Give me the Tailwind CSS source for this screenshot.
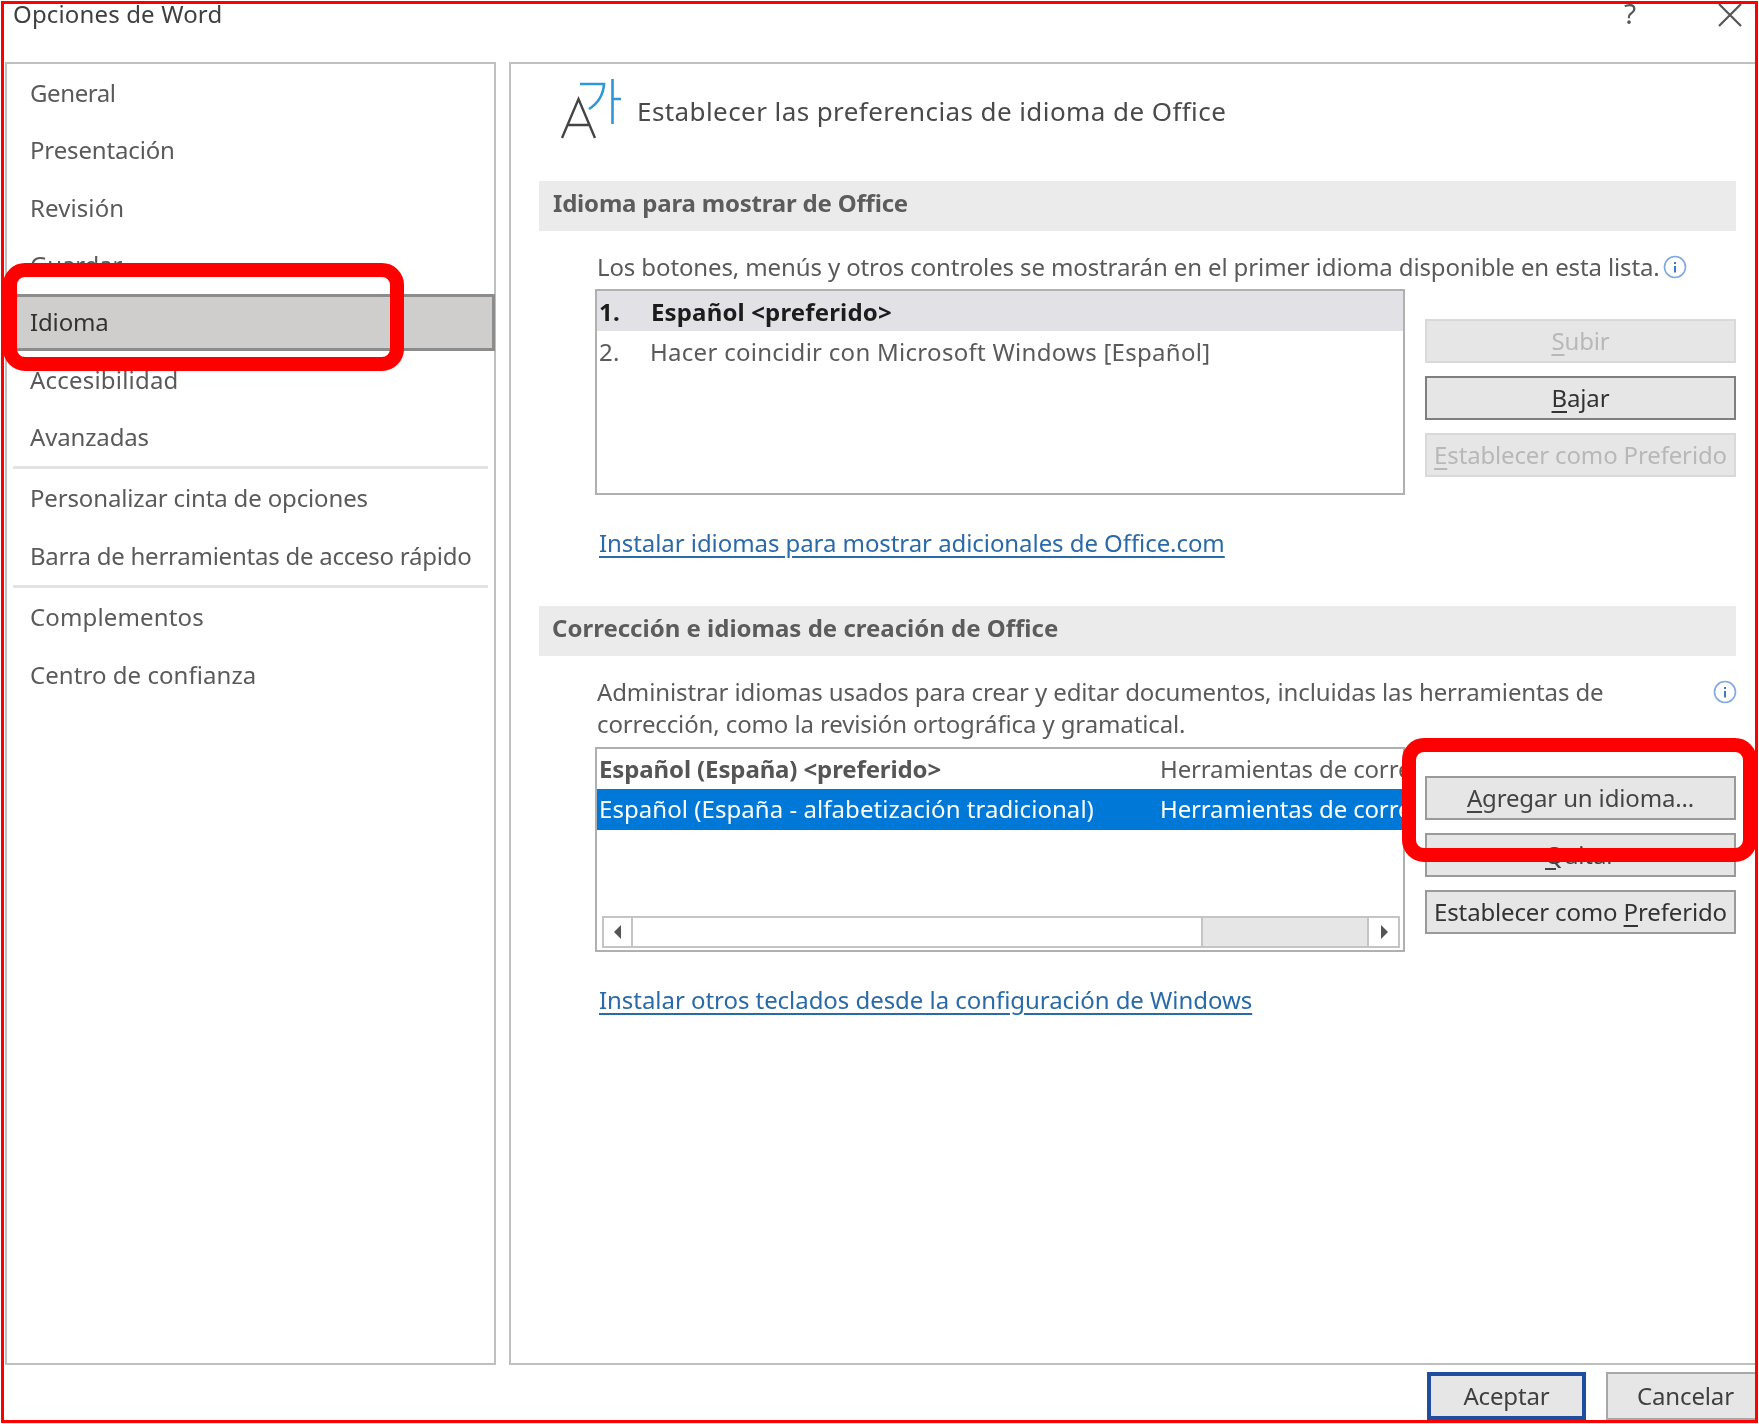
<!DOCTYPE html>
<html lang="es">
<head>
<meta charset="utf-8">
<title>Opciones de Word</title>
<script src="https://cdn.jsdelivr.net/npm/@tailwindcss/browser@4"></script>
</head>
<body class="m-0 bg-white">
<div class="relative w-[1759px] h-[1424px] overflow-hidden bg-white font-['Noto_Sans','Open_Sans',sans-serif] text-[24px] leading-[33px] tracking-[-0.15px] text-[#5a5a5a]">
  <div class="w-[1755px] h-[1420px] mt-[3px] ml-[3px] overflow-hidden flex flex-col blur-[0.4px]">
    <!-- title bar -->
    <div class="h-[59px] shrink-0 flex justify-between overflow-hidden pl-[10px]">
      <span class="-mt-[6px] text-[#404040] tracking-[0.15px]">Opciones de Word</span>
      <div class="flex -mt-[6px]">
        <span class="w-[22px] text-center text-[#555] text-[28px]">?</span>
        <div class="w-[117px] flex justify-center pl-[61px] pt-[6px]">
          <svg width="24" height="24" viewBox="0 0 24 24" class="shrink-0"><path d="M1 1 L23 23 M23 1 L1 23" stroke="#555" stroke-width="2.2" fill="none"/></svg>
        </div>
      </div>
    </div>
    <!-- panels -->
    <div class="h-[1303px] shrink-0 flex gap-[13px] pl-[2px]">
      <!-- sidebar -->
      <nav class="w-[491px] shrink-0 border-2 border-[#bfbfbf] pt-[1px]">
        <div class="h-[57px] pb-[2px] flex items-center pl-[23px] tracking-[-0.4px]">General</div>
        <div class="h-[57px] pb-[2px] flex items-center pl-[23px]">Presentación</div>
        <div class="h-[58px] pb-[2px] flex items-center pl-[23px] tracking-[0.1px]">Revisión</div>
        <div class="h-[57px] pb-[2px] flex items-center pl-[23px]">Guardar</div>
        <div class="h-[57px] pb-[2px] -mr-[1px] flex items-center pl-[20px] bg-[#d0cecd] border-[3px] border-[#8c8c8c] text-[#333]">Idioma</div>
        <div class="h-[58px] pb-[2px] flex items-center pl-[23px] tracking-[0.2px]">Accesibilidad</div>
        <div class="h-[57px] pb-[2px] flex items-center pl-[23px]">Avanzadas</div>
        <div class="h-[3px] mx-[6px] bg-[#e3e3e3]"></div>
        <div class="h-[59px] pb-[2px] flex items-center pl-[23px]">Personalizar cinta de opciones</div>
        <div class="h-[57px] pb-[2px] flex items-center pl-[23px] tracking-[-0.24px]">Barra de herramientas de acceso rápido</div>
        <div class="h-[3px] mx-[6px] bg-[#e3e3e3]"></div>
        <div class="h-[59px] pb-[2px] flex items-center pl-[23px] tracking-[0.15px]">Complementos</div>
        <div class="h-[57px] pb-[2px] flex items-center pl-[23px] tracking-[0.05px]">Centro de confianza</div>
      </nav>
      <!-- main -->
      <main class="flex-1 border-2 border-r-0 border-[#bfbfbf] pl-[27px] pr-[19px]">
        <div class="h-[117px] flex">
          <svg width="66" height="66" viewBox="0 0 66 66" class="shrink-0 ml-[18px] mt-[12px]">
            <path d="M6 62 L22.500 23 L39 62 M11 49 H34" stroke="#444" stroke-width="2.400" fill="none"/>
            <path d="M24 8 H48 Q47 24 33 33" stroke="#2e97d8" stroke-width="2.600" fill="none"/>
            <path d="M56.500 3 V48 M56.500 23 H65" stroke="#2e97d8" stroke-width="2.600" fill="none"/>
          </svg>
          <h1 class="ml-[15px] mt-[27px] h-[40px] text-[26px] leading-[40px] font-normal tracking-[0.42px] text-[#4a4a4a]">Establecer las preferencias de idioma de Office</h1>
        </div>
        <h2 class="h-[50px] ml-[1px] mr-[3px] bg-[#ebebeb] pl-[14px] pb-[8px] flex items-center font-bold text-[#5c5c5c] tracking-[-0.2px]">Idioma para mostrar de Office</h2>
        <div class="pl-[57px]">
          <div class="mt-[20px] ml-[2px] h-[33px] pb-[2px] flex items-center gap-[3px] whitespace-nowrap tracking-[-0.12px]">
            <span>Los botones, menús y otros controles se mostrarán en el primer idioma disponible en esta lista.</span>
            <svg width="24" height="24" viewBox="0 0 24 24" class="shrink-0"><circle cx="12" cy="12" r="10.500" fill="none" stroke="#7fa9e0" stroke-width="1.600"/><path d="M12 7 V9 M12 11 V17.500" stroke="#3f78c9" stroke-width="2" fill="none"/></svg>
          </div>
          <div class="mt-[5px] flex gap-[20px]">
            <div class="w-[810px] h-[206px] border-2 border-[#b0b0b0] text-[#5a5a5a]">
              <div class="h-[40px] bg-[#e1e1e6] flex items-center font-bold text-[#1c1c1c] pl-[2px] tracking-[0.15px]"><span class="w-[52px]">1.</span><span>Español &lt;preferido&gt;</span></div>
              <div class="h-[40px] flex items-center pl-[2px] tracking-[0.28px]"><span class="w-[51px]">2.</span><span>Hacer coincidir con Microsoft Windows [Español]</span></div>
            </div>
            <div class="w-[311px] pt-[30px] flex flex-col gap-[13px]">
              <button class="h-[44px] w-full pb-[2px] bg-[#e6e6e6] border-2 border-[#d9d9d9] text-[#b8b8b8] flex items-center justify-center"><span><u class="underline-offset-[4px]">S</u>ubir</span></button>
              <button class="h-[44px] w-full pb-[2px] bg-[#e6e6e6] border-2 border-[#7f7f7f] text-[#333] flex items-center justify-center"><span><u class="underline-offset-[4px]">B</u>ajar</span></button>
              <button class="h-[44px] w-full pb-[2px] bg-[#e6e6e6] border-2 border-[#d9d9d9] text-[#b8b8b8] flex items-center justify-center whitespace-nowrap"><span><u class="underline-offset-[4px]">E</u>stablecer como Preferido</span></button>
            </div>
          </div>
          <a class="block mt-[31px] h-[34px] pl-[4px] text-[#2a6aa8] underline underline-offset-[4px] whitespace-nowrap tracking-[-0.07px]">Instalar idiomas para mostrar adicionales de Office.com</a>
        </div>
        <h2 class="mt-[46px] h-[50px] ml-[1px] mr-[3px] bg-[#ebebeb] pl-[13px] pb-[8px] flex items-center font-bold text-[#5c5c5c] tracking-[0px]">Corrección e idiomas de creación de Office</h2>
        <div class="pl-[57px]">
          <div class="mt-[20px] ml-[2px] h-[66px] flex justify-between items-start">
            <p class="whitespace-nowrap leading-[32px] tracking-[-0.12px]">Administrar idiomas usados para crear y editar documentos, incluidas las herramientas de<br>corrección, como la revisión ortográfica y gramatical.</p>
            <svg width="24" height="24" viewBox="0 0 24 24" class="shrink-0 mt-[4px] mr-[2px]"><circle cx="12" cy="12" r="10.500" fill="none" stroke="#7fa9e0" stroke-width="1.600"/><path d="M12 7 V9 M12 11 V17.500" stroke="#3f78c9" stroke-width="2" fill="none"/></svg>
          </div>
          <div class="mt-[5px] flex gap-[20px]">
            <div class="w-[810px] h-[205px] border-2 border-[#b0b0b0] overflow-hidden flex flex-col">
              <div class="h-[39px] mt-[1px] pb-[2px] shrink-0 flex items-center pl-[2px] whitespace-nowrap"><span class="w-[561px] shrink-0 font-bold text-[#555] tracking-[-0.12px]">Español (España) &lt;preferido&gt;</span><span>Herramientas de corrección instaladas</span></div>
              <div class="h-[41px] pb-[2px] shrink-0 flex items-center pl-[2px] whitespace-nowrap bg-[#0078d7] text-white"><span class="w-[561px] shrink-0 tracking-[0.05px]">Español (España - alfabetización tradicional)</span><span>Herramientas de corrección instaladas</span></div>
              <div class="mt-[86px] ml-[5px] mr-[3px] h-[32px] shrink-0 flex border-2 border-[#c4c4c4] bg-[#e6e6e6]">
                <div class="w-[29px] bg-white border-r-2 border-[#c4c4c4] flex items-center justify-center"><svg width="10" height="14" viewBox="0 0 10 14"><path d="M8 0 L1 7 L8 14 Z" fill="#555"/></svg></div>
                <div class="w-[570px] bg-white border-r-2 border-[#c4c4c4]"></div>
                <div class="flex-1"></div>
                <div class="w-[31px] bg-white border-l-2 border-[#c4c4c4] flex items-center justify-center"><svg width="10" height="14" viewBox="0 0 10 14"><path d="M2 0 L9 7 L2 14 Z" fill="#555"/></svg></div>
              </div>
            </div>
            <div class="w-[311px] pt-[29px] flex flex-col gap-[13px]">
              <button class="h-[44px] w-full pb-[2px] bg-[#e6e6e6] border-2 border-[#9a9a9a] text-[#444] flex items-center justify-center whitespace-nowrap"><span><u class="underline-offset-[4px]">A</u>gregar un idioma...</span></button>
              <button class="h-[44px] w-full pb-[2px] bg-[#e6e6e6] border-2 border-[#9a9a9a] text-[#444] flex items-center justify-center"><span><u class="underline-offset-[4px]">Q</u>uitar</span></button>
              <button class="h-[44px] w-full pb-[2px] bg-[#e6e6e6] border-2 border-[#9a9a9a] text-[#333] flex items-center justify-center whitespace-nowrap"><span>Establecer como <u class="underline-offset-[4px]">P</u>referido</span></button>
            </div>
          </div>
          <a class="block mt-[31px] h-[33px] pl-[4px] text-[#2a6aa8] underline underline-offset-[4px] whitespace-nowrap tracking-[-0.05px]">Instalar otros teclados desde la configuración de Windows</a>
        </div>
      </main>
    </div>
    <!-- footer -->
    <div class="flex justify-end gap-[20px] pt-[7px] -mr-[38px]">
      <button class="w-[159px] h-[48px] pb-[2px] shrink-0 bg-[#e6e6e6] border-[4px] border-[#1f4e9e] text-[#404040]">Aceptar</button>
      <button class="w-[190px] h-[48px] pb-[2px] shrink-0 bg-[#e6e6e6] border-2 border-[#a8a8a8] text-[#404040] text-left pl-[29px]">Cancelar</button>
    </div>
  </div>
  <!-- annotations -->
  <div class="absolute left-[1px] top-[1px] w-[1757px] h-[1422px] border-[3px] border-[#ff0000]"></div>
  <div class="absolute left-[3px] top-[263px] w-[401px] h-[108px] border-[14px] border-[#ff0000] rounded-[22px]"></div>
  <div class="absolute left-[1402px] top-[738px] w-[355px] h-[124px] border-[14px] border-[#ff0000] rounded-[22px]"></div>
</div>
</body>
</html>
